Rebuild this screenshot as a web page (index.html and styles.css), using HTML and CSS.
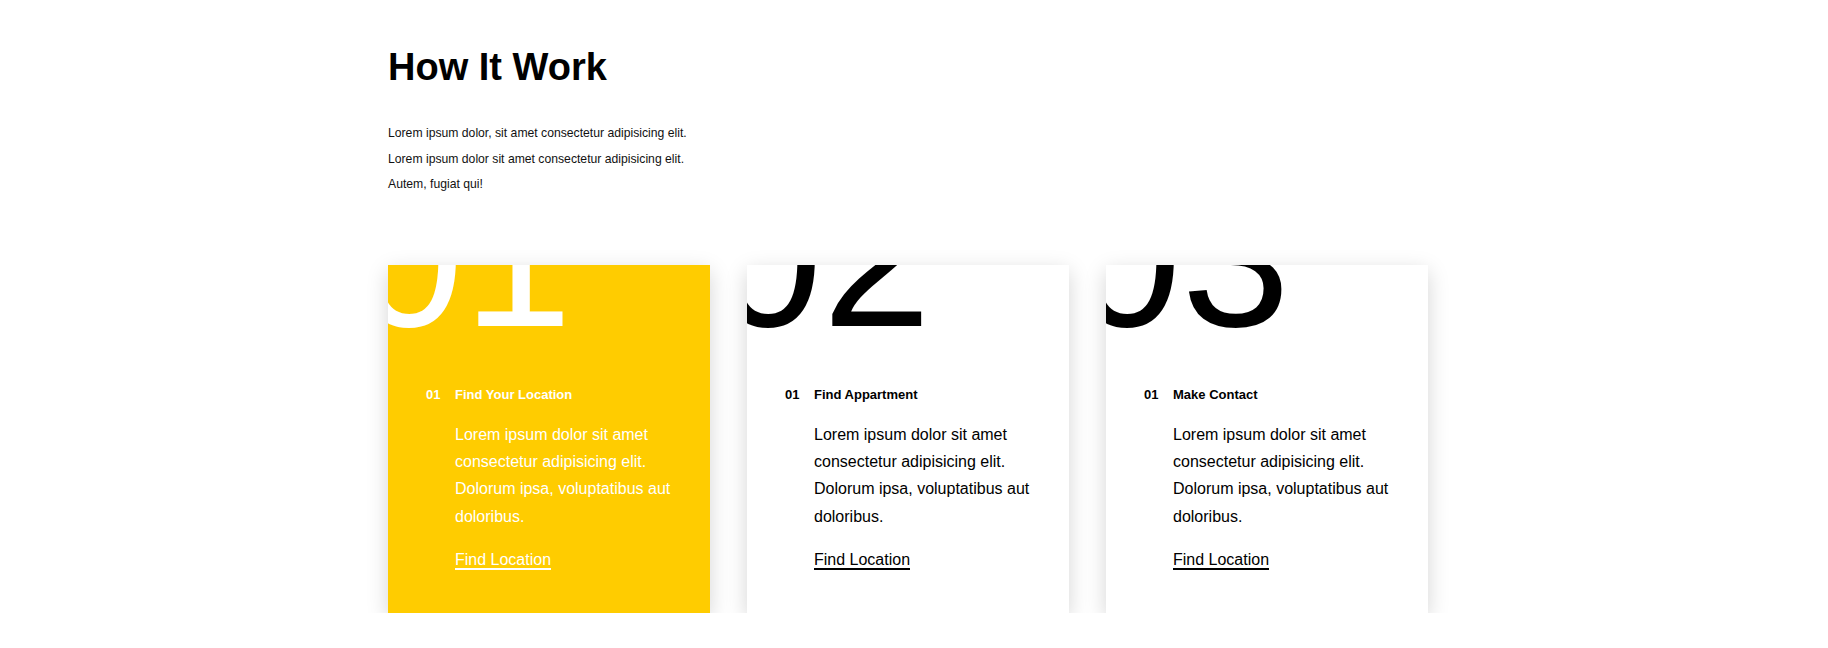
FILE: index.html
```html
<!DOCTYPE html>
<html lang="en">
<head>
<meta charset="utf-8">
<title>How It Work</title>
<link rel="stylesheet" href="styles.css">
</head>
<body>
<section class="how">
  <header class="how-head">
    <h1 class="how-title">How It Work</h1>
    <p class="how-intro">Lorem ipsum dolor, sit amet consectetur adipisicing elit.<br>Lorem ipsum dolor sit amet consectetur adipisicing elit.<br>Autem, fugiat qui!</p>
  </header>
  <div class="steps">
    <article class="step step-active">
      <span class="step-big">01</span>
      <div class="step-body">
        <h3 class="step-title"><span class="step-num">01</span>Find Your Location</h3>
        <p class="step-text">Lorem ipsum dolor sit amet consectetur adipisicing elit. Dolorum ipsa, voluptatibus aut doloribus.</p>
        <div class="step-link-row"><a class="step-link" href="#">Find Location</a></div>
      </div>
    </article>
    <article class="step">
      <span class="step-big">02</span>
      <div class="step-body">
        <h3 class="step-title"><span class="step-num">01</span>Find Appartment</h3>
        <p class="step-text">Lorem ipsum dolor sit amet consectetur adipisicing elit. Dolorum ipsa, voluptatibus aut doloribus.</p>
        <div class="step-link-row"><a class="step-link" href="#">Find Location</a></div>
      </div>
    </article>
    <article class="step">
      <span class="step-big">03</span>
      <div class="step-body">
        <h3 class="step-title"><span class="step-num">01</span>Make Contact</h3>
        <p class="step-text">Lorem ipsum dolor sit amet consectetur adipisicing elit. Dolorum ipsa, voluptatibus aut doloribus.</p>
        <div class="step-link-row"><a class="step-link" href="#">Find Location</a></div>
      </div>
    </article>
  </div>
</section>
</body>
</html>
```

FILE: styles.css
```css
* { box-sizing: border-box; }

html, body {
  margin: 0;
  padding: 0;
  background: #ffffff;
}

body {
  font-family: "Liberation Sans", Arial, sans-serif;
  color: #000;
}

.how {
  width: 1052px;
  margin: 0 auto;
  padding-top: 45.5px;
}

.how-title {
  margin: 0;
  font-size: 38px;
  line-height: 43px;
  font-weight: 700;
  color: #000;
}

.how-intro {
  margin: 32.5px 0 0;
  font-size: 12.2px;
  line-height: 25.5px;
  color: #111;
}

.steps {
  display: grid;
  grid-template-columns: repeat(3, 322px);
  column-gap: 37px;
  margin-top: 67.5px;
}

.step {
  position: relative;
  overflow: hidden;
  height: 348px;
  background: #fff;
  color: #000;
  box-shadow: 0 6px 20px rgba(0, 0, 0, 0.17);
}

.step-active {
  background: #ffcc00;
  color: #fff;
}

.step-big {
  position: absolute;
  top: -104px;
  left: -33px;
  font-size: 195px;
  line-height: 1;
  font-weight: 400;
  white-space: nowrap;
}

.step-body {
  position: relative;
  padding: 121.5px 25px 0 38px;
}

.step-title {
  display: flex;
  margin: 0;
  font-size: 13px;
  line-height: 15px;
  font-weight: 700;
}

.step-num {
  width: 29px;
}

.step-text {
  margin: 19.4px 0 0 29px;
  font-size: 16px;
  line-height: 27.2px;
}

.step-link-row {
  margin: 16px 0 0 29px;
  font-size: 16px;
  line-height: 27.2px;
}

.step-link {
  color: inherit;
  text-decoration: none;
  border-bottom: 2px solid currentColor;
}
```
